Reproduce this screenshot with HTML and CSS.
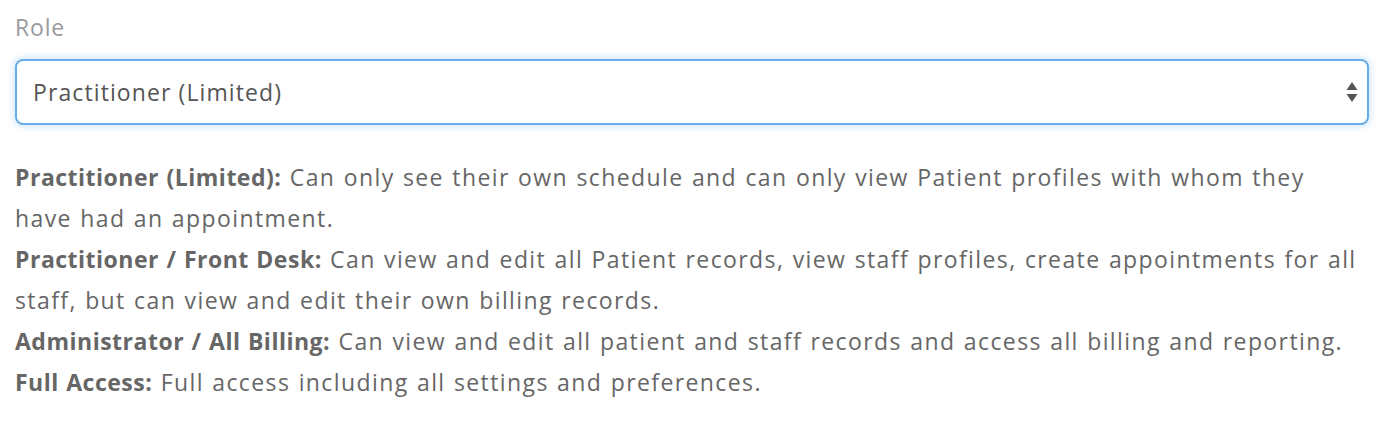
FILE: index.html
```html
<!DOCTYPE html>
<html lang="en">
<head>
  <meta charset="UTF-8">
  <title>Role</title>
  <link rel="stylesheet" href="styles.css">
</head>
<body>

  <div class="field">
    <label class="field-label" for="role">Role</label>

    <!-- Role select -->
    <div class="select-box">
      <select id="role" class="select">
        <option>Practitioner (Limited)</option>
        <option>Practitioner / Front Desk</option>
        <option>Administrator / All Billing</option>
        <option>Full Access</option>
      </select>
      <svg class="select-arrows" width="12" height="22" viewBox="0 0 12 22">
        <path d="M6 1 L11.5 9 L0.5 9 Z" fill="#555"/>
        <path d="M6 21 L11.5 13 L0.5 13 Z" fill="#555"/>
      </svg>
    </div>

    <!-- Role descriptions -->
    <div class="help">
      <p><strong>Practitioner (Limited):</strong> Can only see their own schedule and can only view Patient profiles with whom they have had an appointment.</p>
      <p><strong>Practitioner / Front Desk:</strong> Can view and edit all Patient records, view staff profiles, create appointments for all staff, but can view and edit their own billing records.</p>
      <p><strong>Administrator / All Billing:</strong> Can view and edit all patient and staff records and access all billing and reporting.</p>
      <p><strong>Full Access:</strong> Full access including all settings and preferences.</p>
    </div>
  </div>

</body>
</html>
```

FILE: styles.css
```css
body {
  margin: 0;
  background: #fff;
  font-family: 'Open Sans', 'Noto Sans', sans-serif;
  color: #666;
}

.field {
  padding: 10px 27px 0 15px;
}

.field-label {
  display: block;
  font-size: 23px;
  line-height: 34px;
  letter-spacing: 0.8px;
  color: #9a9a9e;
  margin-bottom: 15px;
}

.select-box {
  position: relative;
}

.select {
  display: block;
  width: 100%;
  height: 66px;
  padding: 0 40px 0 16px;
  font-family: inherit;
  font-size: 23px;
  letter-spacing: 1.1px;
  color: #555;
  background: #fff;
  border: 2px solid #66aee9;
  border-radius: 8px;
  box-shadow: 0 0 8px rgba(102, 175, 233, 0.45);
  outline: none;
  appearance: none;
  -webkit-appearance: none;
}

.select-arrows {
  position: absolute;
  right: 11px;
  top: 22px;
  pointer-events: none;
}

.help {
  margin-top: 32px;
  font-size: 23px;
  line-height: 41px;
  letter-spacing: 1.4px;
  word-spacing: 1px;
}

.help p {
  margin: 0;
}

.help strong {
  color: #666;
  letter-spacing: 0.5px;
}
```
